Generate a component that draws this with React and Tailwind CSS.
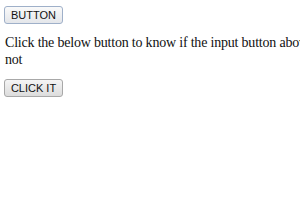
import React from 'react';

export default function App() {
  return (
    <div className="w-[300px] h-[210px] overflow-hidden bg-white pl-[4px] pt-[6px] font-['Liberation_Serif',serif]">
      <button className="flex items-center justify-center h-[18px] w-[59px] border border-[#9fb0c9] rounded-[3px] bg-gradient-to-b from-[#fafafa] to-[#e4e6ea] text-[11px] leading-none text-[#111] font-['Liberation_Sans',Arial,sans-serif]">
        BUTTON
      </button>
      <p className="mt-[10px] pl-[1px] whitespace-nowrap text-[14px] leading-[17px] tracking-[-0.2px] text-[#111]">
        Click the below button to know if the input button above is disabled or
        <br />
        not
      </p>
      <button className="mt-[11px] flex items-center justify-center h-[18px] w-[59px] border border-[#a8a8a8] rounded-[3px] bg-gradient-to-b from-[#f5f5f5] to-[#dcdcdc] text-[11px] leading-none text-[#111] font-['Liberation_Sans',Arial,sans-serif]">
        CLICK IT
      </button>
    </div>
  );
}
